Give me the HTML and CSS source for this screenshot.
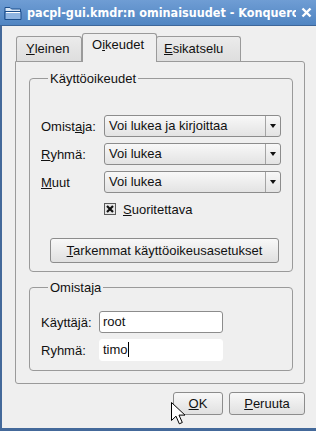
FILE: index.html
```html
<!DOCTYPE html>
<html lang="fi">
<head>
    <meta charset="UTF-8">
    <title>pacpl-gui.kmdr:n ominaisuudet</title>
    <link rel="stylesheet" href="styles.css">
</head>
<body>
    <div class="window">
        <div class="titlebar">
            <svg class="title-icon" width="18" height="16" viewBox="0 0 18 16">
                <path d="M1 2.5h5l1.5 1.5h9v10.5h-15.5z" fill="#d7e6f7" stroke="#1d4f8c"/>
                <path d="M1 6.5h16v8h-16z" fill="#8fb5e2" stroke="#1d4f8c"/>
                <path d="M2 7.5h14" stroke="#ffffff"/>
            </svg>
            <span class="title-text">pacpl-gui.kmdr:n ominaisuudet - Konqueror</span>
            <svg class="title-close" width="11" height="11" viewBox="0 0 11 11">
                <path d="M1.5 1.5l8 8M9.5 1.5l-8 8" stroke="#ffffff" stroke-width="2.4"/>
            </svg>
        </div>
        <div class="frame">
            <div class="tabbar">
                <div class="tab tab-first"><u>Y</u>leinen</div>
                <div class="tab tab-active">O<u>i</u>keudet</div>
                <div class="tab tab-last"><u>E</u>sikatselu</div>
            </div>
            <div class="pane">
                <!-- Permissions -->
                <div class="group group-perms">
                    <div class="group-title">Käyttöoikeudet</div>
                    <div class="form-grid">
                        <label>Omist<u>a</u>ja:</label>
                        <div class="combo"><span class="combo-value">Voi lukea ja kirjoittaa</span><span class="combo-arrow"></span></div>
                        <label><u>R</u>yhmä:</label>
                        <div class="combo"><span class="combo-value">Voi lukea</span><span class="combo-arrow"></span></div>
                        <label><u>M</u>uut</label>
                        <div class="combo"><span class="combo-value">Voi lukea</span><span class="combo-arrow"></span></div>
                    </div>
                    <div class="check-row">
                        <svg class="checkbox" width="12" height="12" viewBox="0 0 12 12">
                            <rect x="0.5" y="0.5" width="11" height="11" fill="#e6e6e6" stroke="#5a5a5a"/>
                            <path d="M3 3l6 6M9 3l-6 6" stroke="#111111" stroke-width="2.2"/>
                        </svg>
                        <span><u>S</u>uoritettava</span>
                    </div>
                    <button type="button" class="btn btn-wide"><u>T</u>arkemmat käyttöoikeusasetukset</button>
                </div>

                <!-- Owner -->
                <div class="group group-owner">
                    <div class="group-title">Omistaja</div>
                    <div class="owner-grid">
                        <label>Käyttäjä:</label>
                        <div class="field">root</div>
                        <label>Ryhmä:</label>
                        <div class="field field-focus">timo<span class="caret"></span></div>
                    </div>
                </div>
            </div>
            <div class="dialog-buttons">
                <button type="button" class="btn btn-ok"><u>O</u>K</button>
                <button type="button" class="btn btn-cancel"><u>P</u>eruuta</button>
            </div>
            <svg class="pointer" width="14" height="24" viewBox="0 0 14 24">
                <path d="M0.5 0.5v18l4.5-4.3 3.3 7.6 3-1.3-3.3-7.4h6z" fill="#ffffff" stroke="#000000"/>
            </svg>
        </div>
    </div>
</body>
</html>
```

FILE: styles.css
```css
:root {
    --bg-color: #efefef;
    --border-color: #9a9a9a;
    --frame-color: #44699a;
    --text-color: #111;
}
body {
    margin: 0;
    font-family: 'Liberation Sans', Arial, sans-serif;
    font-size: 13px;
    color: var(--text-color);
    background-color: var(--bg-color);
}
.window {
    width: 316px;
    height: 431px;
    display: flex;
    flex-direction: column;
    overflow: hidden;
}
.titlebar {
    height: 26px;
    flex: none;
    display: flex;
    align-items: center;
    background: linear-gradient(to bottom, #6f9dd4, #5085c2);
    border-bottom: 1px solid #3d6699;
    box-sizing: border-box;
}
.title-icon {
    margin-left: 4px;
    flex: none;
}
.title-text {
    margin-left: 5px;
    width: 269px;
    overflow: hidden;
    white-space: nowrap;
    font-family: 'DejaVu Sans Condensed', 'DejaVu Sans', sans-serif;
    font-weight: bold;
    font-size: 12.5px;
    color: #fff;
}
.title-close {
    margin-left: 5px;
    flex: none;
}
.frame {
    flex: 1;
    position: relative;
    border-left: 2px solid var(--frame-color);
    border-bottom: 3px solid var(--frame-color);
    padding-top: 7px;
}
.tabbar {
    display: flex;
    align-items: flex-end;
    height: 28px;
    margin-left: 14px;
}
.tab {
    height: 25px;
    box-sizing: border-box;
    padding: 0 9px;
    line-height: 24px;
    border: 1px solid var(--border-color);
    border-bottom: none;
    border-radius: 3px 3px 0 0;
    background: linear-gradient(to bottom, #ebebeb, #dedede);
}
.tab-first {
    width: 66px;
}
.tab-active {
    width: 75px;
    height: 29px;
    margin: 0 0 -1px 0;
    line-height: 22px;
    padding-bottom: 4px;
    background: var(--bg-color);
    position: relative;
    z-index: 1;
}
.tab-last {
    width: 85px;
    margin-left: -1px;
    padding-left: 7px;
}
.pane {
    width: 290px;
    box-sizing: border-box;
    margin-left: 13px;
    border: 1px solid var(--border-color);
    border-radius: 0 3px 3px 3px;
    padding: 16px 11px 12px 13px;
}
.group {
    border: 1px solid var(--border-color);
    border-radius: 4px;
    padding: 0 11px 8px 11px;
}
.group-title {
    width: fit-content;
    margin: -8px 0 0 7px;
    padding: 0 2px;
    line-height: 15px;
    background: var(--bg-color);
}
.form-grid {
    display: grid;
    grid-template-columns: 63px 177px;
    grid-auto-rows: 22px;
    row-gap: 6px;
    margin-top: 29px;
    align-items: center;
}
.combo {
    height: 22px;
    box-sizing: border-box;
    display: flex;
    border: 1px solid #8c8c8c;
    border-radius: 3px;
    background: linear-gradient(to bottom, #f8f8f8, #e3e3e3);
}
.combo-value {
    flex: 1;
    padding-left: 4px;
    line-height: 20px;
}
.combo-arrow {
    width: 14px;
    border-left: 1px solid #a4a4a4;
    display: flex;
    align-items: center;
    justify-content: center;
}
.combo-arrow::after {
    content: "";
    border-left: 3.5px solid transparent;
    border-right: 3.5px solid transparent;
    border-top: 4px solid #111;
}
.check-row {
    display: flex;
    align-items: center;
    height: 16px;
    margin: 8px 0 0 63px;
    gap: 7px;
}
.btn {
    font-family: inherit;
    font-size: 13px;
    color: var(--text-color);
    border: 1px solid #8c8c8c;
    border-radius: 3px;
    background: linear-gradient(to bottom, #f8f8f8, #e0e0e0);
    padding: 0;
    box-sizing: border-box;
}
.btn-wide {
    display: block;
    width: 229px;
    height: 25px;
    margin: 21px 0 0 9px;
}
.group-owner {
    margin-top: 15px;
    padding-bottom: 9px;
}
.owner-grid {
    display: grid;
    grid-template-columns: 58px 124px;
    grid-auto-rows: 22px;
    row-gap: 6px;
    margin-top: 16px;
    align-items: center;
}
.field {
    height: 22px;
    box-sizing: border-box;
    border: 1px solid #8c8c8c;
    border-radius: 3px;
    background: #fff;
    padding-left: 3px;
    line-height: 20px;
}
.field-focus {
    border-color: #fff;
}
.caret {
    display: inline-block;
    width: 1px;
    height: 15px;
    background: #000;
    vertical-align: -3px;
}
.dialog-buttons {
    display: flex;
    justify-content: flex-end;
    gap: 6px;
    margin-top: 8px;
    padding-right: 11px;
}
.btn-ok {
    width: 50px;
    height: 23px;
}
.btn-cancel {
    width: 76px;
    height: 23px;
}
.pointer {
    position: absolute;
    left: 169px;
    top: 376px;
}
```
